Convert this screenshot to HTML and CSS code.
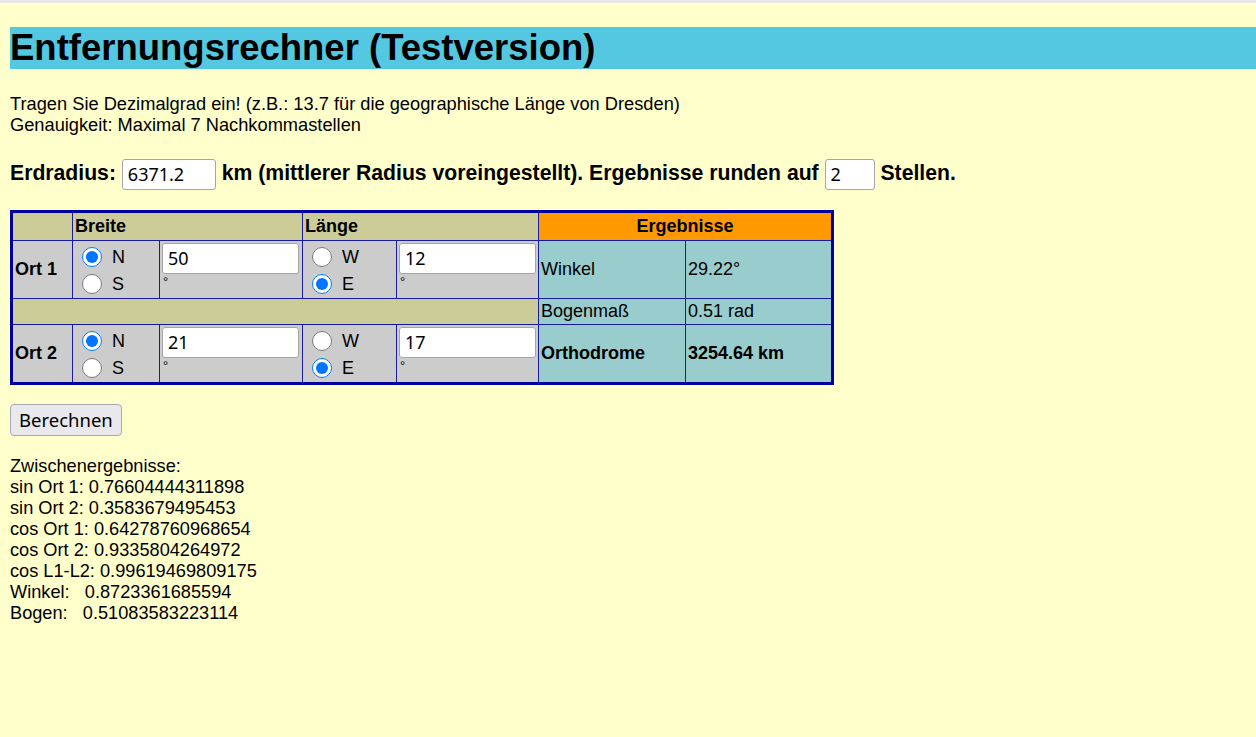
FILE: index.html
```html
<!DOCTYPE html>
<html lang="de">
<head>
<meta charset="utf-8">
<title>Entfernungsrechner</title>
<link rel="stylesheet" href="styles.css">
</head>
<body>
<h1 class="title">Entfernungsrechner (Testversion)</h1>
<p class="intro">Tragen Sie Dezimalgrad ein! (z.B.: 13.7 für die geographische Länge von Dresden)<br>Genauigkeit: Maximal 7 Nachkommastellen</p>
<p class="radius">Erdradius: <input class="field field-radius" type="text" value="6371.2"> km (mittlerer Radius voreingestellt). Ergebnisse runden auf <input class="field field-digits" type="text" value="2"> Stellen.</p>
<table class="calc">
  <colgroup>
    <col class="c1"><col class="c2"><col class="c3"><col class="c4"><col class="c5"><col class="c6"><col class="c7">
  </colgroup>
  <tr class="head">
    <td class="olive"></td>
    <th class="olive" colspan="2">Breite</th>
    <th class="olive" colspan="2">Länge</th>
    <th class="orange" colspan="2">Ergebnisse</th>
  </tr>
  <tr class="row">
    <td class="gray label">Ort 1</td>
    <td class="gray radios">
      <div class="opts">
        <label class="opt"><input type="radio" name="b1" checked> N</label>
        <label class="opt"><input type="radio" name="b1"> S</label>
      </div>
    </td>
    <td class="gray inp"><div class="inp-box"><input class="field coord" type="text" value="50"><div class="deg">°</div></div></td>
    <td class="gray radios">
      <div class="opts">
        <label class="opt"><input type="radio" name="l1"> W</label>
        <label class="opt"><input type="radio" name="l1" checked> E</label>
      </div>
    </td>
    <td class="gray inp"><div class="inp-box"><input class="field coord" type="text" value="12"><div class="deg">°</div></div></td>
    <td class="teal">Winkel</td>
    <td class="teal">29.22°</td>
  </tr>
  <tr class="sep">
    <td class="olive" colspan="5"></td>
    <td class="teal">Bogenmaß</td>
    <td class="teal">0.51 rad</td>
  </tr>
  <tr class="row">
    <td class="gray label">Ort 2</td>
    <td class="gray radios">
      <div class="opts">
        <label class="opt"><input type="radio" name="b2" checked> N</label>
        <label class="opt"><input type="radio" name="b2"> S</label>
      </div>
    </td>
    <td class="gray inp"><div class="inp-box"><input class="field coord" type="text" value="21"><div class="deg">°</div></div></td>
    <td class="gray radios">
      <div class="opts">
        <label class="opt"><input type="radio" name="l2"> W</label>
        <label class="opt"><input type="radio" name="l2" checked> E</label>
      </div>
    </td>
    <td class="gray inp"><div class="inp-box"><input class="field coord" type="text" value="17"><div class="deg">°</div></div></td>
    <td class="teal bold">Orthodrome</td>
    <td class="teal bold">3254.64 km</td>
  </tr>
</table>
<button class="btn" type="button">Berechnen</button>
<div class="steps">
Zwischenergebnisse:<br>
sin Ort 1: 0.76604444311898<br>
sin Ort 2: 0.3583679495453<br>
cos Ort 1: 0.64278760968654<br>
cos Ort 2: 0.9335804264972<br>
cos L1-L2: 0.99619469809175<br>
Winkel:&nbsp;&nbsp; 0.8723361685594<br>
Bogen:&nbsp;&nbsp; 0.51083583223114
</div>
</body>
</html>
```
FILE: styles.css
```css
html {
  background: #ffffcc;
  border-top: 3px solid #e8e8e8;
}
body {
  margin: 0 0 0 10px;
  font-family: "Liberation Sans", Arial, sans-serif;
  font-size: 18.2px;
  color: #000;
}
.title {
  margin: 24px 0 0 0;
  background: #55c8e1;
  font-size: 36.5px;
  line-height: 42px;
  height: 42px;
  font-weight: bold;
}
.intro {
  margin: 24px 0 0 0;
  font-size: 18.25px;
  line-height: 21px;
}
.radius {
  margin: 22px 0 0 0;
  font-weight: bold;
  font-size: 21.2px;
  line-height: 32px;
}
.field {
  font-family: "Noto Sans", "Open Sans", sans-serif;
  font-size: 18px;
  height: 31px;
  box-sizing: border-box;
  border: 1px solid #a5a5a5;
  border-radius: 3px;
  padding: 0 5px;
  background: #fff;
  color: #000;
  vertical-align: middle;
}
.field-radius { width: 94px; }
.field-digits { width: 50px; }
.calc {
  margin-top: 20px;
  border-collapse: collapse;
  border: 3px solid #00009c;
  table-layout: fixed;
  width: 823px;
}
.c1 { width: 61px; }
.c2 { width: 87px; }
.c3 { width: 143px; }
.c4 { width: 94px; }
.c5 { width: 142px; }
.c6 { width: 147px; }
.c7 { width: 147px; }
.calc td, .calc th {
  border: 1px solid #1a1aa8;
  padding: 0 2px;
  font-size: 18px;
}
.calc th {
  text-align: left;
  font-weight: bold;
}
.head th, .head td { height: 27px; }
.calc th.orange { text-align: center; }
.olive { background: #cccc99; }
.orange { background: #ff9900; }
.gray { background: #cccccc; }
.teal { background: #99cccc; }
.bold { font-weight: bold; }
.label { font-weight: bold; }
.row td { height: 57px; }
.sep td { height: 25px; }
.calc td.radios {
  padding: 0 0 0 9px;
  vertical-align: top;
}
.opts { padding-top: 3px; }
.opt {
  display: flex;
  align-items: center;
  gap: 10px;
  height: 27px;
}
.opt input {
  margin: 0;
  width: 20px;
  height: 20px;
}
.calc td.inp { vertical-align: top; padding: 0 2px; }
.inp-box { padding-top: 2px; }
.coord { width: 137px; display: block; }
.deg { font-size: 13px; line-height: 16px; padding-left: 1px; }
.btn {
  margin-top: 19px;
  display: block;
  font-family: "Noto Sans", "Open Sans", sans-serif;
  font-size: 18.5px;
  height: 32px;
  padding: 0 8px;
  background: #e9e9ed;
  border: 1px solid #a9a9b1;
  border-radius: 4px;
  color: #000;
}
.steps {
  margin-top: 20px;
  font-size: 18.2px;
  line-height: 21px;
}
```
